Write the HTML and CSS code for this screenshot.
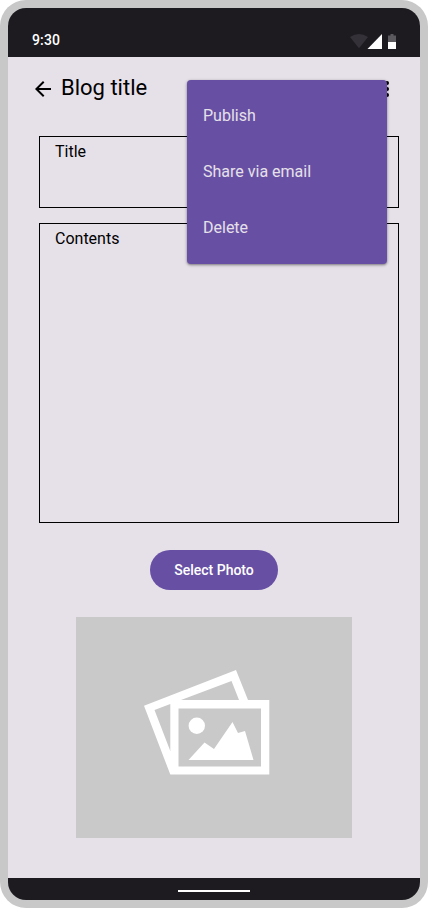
FILE: index.html
```html
<!DOCTYPE html>
<html lang="en">
<head>
<meta charset="utf-8">
<title>Blog title</title>
<link rel="stylesheet" href="styles.css">
</head>
<body>
<div class="phone">
  <header class="status">
    <span class="clock">9:30</span>
    <svg class="status-icons" width="48" height="18" viewBox="0 0 48 18">
      <path d="M0 5Q9-1 18 5L9 16.3Z" fill="#343238"/>
      <path d="M32 2V17H17.5Z" fill="#fff"/>
      <path d="M38 10V3.5H40.5V2H43.5V3.5H46V10Z" fill="#5b595d"/>
      <path d="M38 10H46V17H38Z" fill="#fff"/>
    </svg>
  </header>
  <main class="screen">
    <div class="appbar">
      <svg class="icon" width="24" height="24" viewBox="0 0 24 24"><path d="M20 11H7.83l5.59-5.59L12 4l-8 8 8 8 1.41-1.41L7.83 13H20v-2z"/></svg>
      <h1>Blog title</h1>
      <svg class="icon more" width="24" height="24" viewBox="0 0 24 24"><circle cx="12" cy="6" r="2"/><circle cx="12" cy="12" r="2"/><circle cx="12" cy="18" r="2"/></svg>
      <nav class="menu">
        <div class="item">Publish</div>
        <div class="item">Share via email</div>
        <div class="item">Delete</div>
      </nav>
    </div>
    <div class="field field-title">Title</div>
    <div class="field field-contents">Contents</div>
    <button class="select">Select Photo</button>
    <svg class="photo" width="276" height="221" viewBox="76 617 276 221">
      <path fill="#fff" d="M144 705.8L236 670L248 700H269.3V774.5H170.3ZM154.5 710L170.3 751V703.9ZM181 700H239L231.5 681Z" fill-rule="evenodd"/>
      <path d="M178.5 708.5H261V766.5H178.5Z" fill="#c9c9c9"/>
      <circle cx="196.8" cy="725.8" r="8.2" fill="#fff"/>
      <path d="M188.5 760L204.5 742.5L214 749L232.5 722L238 733L245 731L253.5 760Z" fill="#fff"/>
    </svg>
  </main>
  <footer class="navbar"><span class="handle"></span></footer>
</div>
</body>
</html>
```
FILE: styles.css
```css
* { box-sizing: border-box; }
body { margin: 0; background: #fff; font-family: Roboto, sans-serif; color: #000; }
.phone {
  width: 428px; height: 908px;
  display: flex; flex-direction: column;
  padding: 8px;
  background: #c8c8c8;
  border-radius: 26px;
}
.status {
  height: 49px; padding: 22px 22px 7px 24px;
  display: flex; align-items: center; justify-content: space-between;
  background: #1d1b20; border-radius: 18px 18px 0 0;
}
.clock { color: #fff; font-size: 14px; line-height: 20px; font-weight: 500; letter-spacing: .14px; }
.status-icons { display: block; margin-top: 2px; }
.screen {
  flex: 1; display: flex; flex-direction: column; align-items: center;
  background: #e6e0e9;
}
.appbar {
  position: relative; width: 100%; height: 79px;
  padding: 16px 21px 0 23px;
  display: flex; align-items: flex-start;
}
.icon { display: block; margin-top: 4px; }
.appbar h1 { flex: 1; margin: 1px 0 0 6px; font-size: 22px; line-height: 28px; font-weight: 400; }
.menu {
  position: absolute; left: 179px; top: 23px;
  width: 200px; height: 184px; padding: 8px 0;
  background: #6750a4; border-radius: 4px;
  box-shadow: 0 1px 2px rgba(0,0,0,.3), 0 1px 3px 1px rgba(0,0,0,.15);
}
.item { height: 56px; padding: 0 16px; line-height: 56px; font-size: 16px; color: #e6e0e9; }
.field { width: 360px; margin-left: 10px; padding: 3px 15px; border: 1px solid #000; font-size: 16px; line-height: 24px; }
.field-title { height: 72px; }
.field-contents { height: 300px; margin-top: 15px; }
.select {
  width: 128px; height: 40px; margin-top: 27px; padding: 0;
  border: 0; border-radius: 20px; background: #6750a4; color: #fff;
  font: 500 14px/20px Roboto, sans-serif; letter-spacing: 0;
}
.photo { display: block; margin-top: 27px; background: #c9c9c9; }
.navbar {
  height: 22px; display: flex; justify-content: center; padding-top: 12px;
  background: #1d1b20; border-radius: 0 0 18px 18px;
}
.handle { width: 72px; height: 2px; background: #fff; }
```
